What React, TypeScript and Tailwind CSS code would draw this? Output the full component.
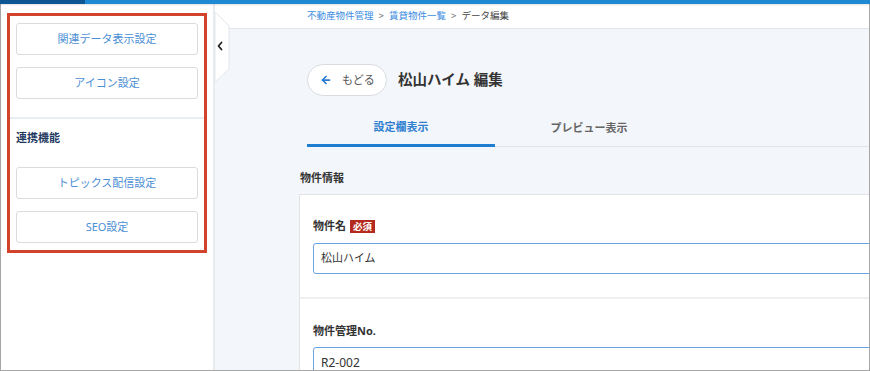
import React from "react";
import { ArrowLeft } from "lucide-react";

function SideButton({ label }: { label: string }) {
  return (
    <div className="h-[32px] w-full border border-[#dcdcdc] rounded-[3px] bg-white flex items-center justify-center text-[11px] text-[#4a8ed4]">
      {label}
    </div>
  );
}

export default function App() {
  return (
    <div className="w-[870px] h-[371px] flex flex-col overflow-hidden bg-white font-['Noto_Sans','Noto_Sans_CJK_JP',sans-serif]">
      <div className="h-[4px] flex shrink-0 relative z-10 shadow-[0_1px_2px_rgba(0,0,0,0.12)]">
        <div className="w-[85px] bg-[#0d5593]" />
        <div className="flex-1 bg-[#2089d3]" />
      </div>
      <div className="flex-1 flex min-h-0 border-x border-b border-[#a6a6a6]">
        {/* Sidebar */}
        <div className="w-[214px] shrink-0 bg-white border-r-2 border-[#e7ebf0] pt-[9px] pl-[6px]">
          <div className="w-[200px] h-[240px] border-[3px] border-[#d1432b] px-[6px] pt-[7px] flex flex-col">
            <SideButton label="関連データ表示設定" />
            <div className="mt-[12px]">
              <SideButton label="アイコン設定" />
            </div>
            <div className="-mx-[6px] mt-[18px] h-[2px] bg-[#e8edf3]" />
            <div className="mt-[11px] h-[16px] leading-[16px] text-[11px] font-bold text-[#1f3a5f]">
              連携機能
            </div>
            <div className="mt-[21px]">
              <SideButton label="トピックス配信設定" />
            </div>
            <div className="mt-[12px]">
              <SideButton label="SEO設定" />
            </div>
          </div>
        </div>

        {/* Main */}
        <div className="flex-1 min-w-0 relative flex flex-col bg-[#f3f6fa] overflow-hidden">
          <div className="h-[25px] shrink-0 bg-white border-b border-[#e1e5ea] flex items-center pl-[92px] text-[9.5px] whitespace-nowrap">
            <span className="text-[#3d8de0]">不動産物件管理</span>
            <span className="text-[#666] px-[5px]">&gt;</span>
            <span className="text-[#3d8de0]">賃貸物件一覧</span>
            <span className="text-[#666] px-[5px]">&gt;</span>
            <span className="text-[#444]">データ編集</span>
          </div>

          <svg
            className="absolute left-0 top-[8px]"
            width="15"
            height="71"
            viewBox="0 0 15 71"
          >
            <polygon points="0,0 14,14 14,57 0,70" fill="#ffffff" stroke="#e3e7ec" strokeWidth="1" />
            <path d="M6.5 30.5 L3.5 34 L6.5 37.5" fill="none" stroke="#222" strokeWidth="1.8" strokeLinecap="round" strokeLinejoin="round" />
          </svg>

          <div className="pl-[84px] flex flex-col">
            <div className="mt-[35px] ml-[8px] flex items-center">
              <div className="h-[32px] w-[80px] rounded-full border border-[#d9dde2] bg-white flex items-center pl-[12px]">
                <ArrowLeft size={12} strokeWidth={3.5} className="text-[#2a7bd0]" />
                <span className="ml-[10px] text-[11px] text-[#555]">もどる</span>
              </div>
              <div className="ml-[11px] text-[14.5px] font-bold text-[#333]">松山ハイム 編集</div>
            </div>

            <div className="mt-[14px] ml-[8px] flex w-[700px]">
              <div className="w-[188px] h-[37px] border-b-[3px] border-[#1f7dd0] flex items-center justify-center text-[11px] font-bold text-[#2f7fcf]">
                設定欄表示
              </div>
              <div className="w-[188px] h-[37px] border-b border-[#e0e3e7] flex items-center justify-center text-[11px] font-bold text-[#666]">
                プレビュー表示
              </div>
              <div className="flex-1 h-[37px] border-b border-[#e0e3e7]" />
            </div>

            <div className="mt-[23px] pl-[1px] h-[16px] leading-[16px] text-[11px] font-bold text-[#333]">
              物件情報
            </div>

            <div className="mt-[8px] w-[620px] bg-white border-t border-l border-[#e3e3e3]">
              <div className="pl-[13px] pt-[23px] pb-[23px]">
                <div className="h-[16px] flex items-center">
                  <span className="text-[11px] font-bold text-[#333]">物件名</span>
                  <span className="ml-[4px] h-[13px] px-[3px] bg-[#b52a1e] text-white text-[9.5px] font-bold leading-[13px] flex items-center">
                    必須
                  </span>
                </div>
                <div className="mt-[9px] h-[31px] border border-[#68a4e0] rounded-[3px] flex items-center pl-[7px] text-[11px] text-[#333]">
                  松山ハイム
                </div>
              </div>
              <div className="h-[2px] bg-[#efefef]" />
              <div className="pl-[13px] pt-[24px]">
                <div className="h-[16px] flex items-center text-[11px] font-bold text-[#333]">
                  物件管理No.
                </div>
                <div className="mt-[8px] h-[31px] border border-[#68a4e0] rounded-[3px] flex items-center pl-[7px] text-[12px] text-[#333]">
                  R2-002
                </div>
              </div>
            </div>
          </div>
        </div>
      </div>
    </div>
  );
}
